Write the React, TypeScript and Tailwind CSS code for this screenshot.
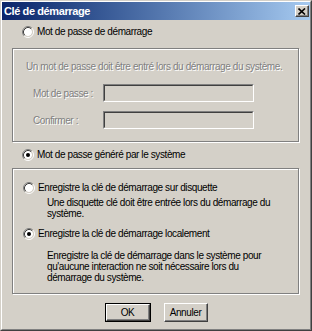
import React from 'react';

const font = "font-['Liberation_Sans',Arial,sans-serif]";

function Radio({ checked }: { checked?: boolean }) {
  return (
    <svg width="12" height="12" viewBox="0 0 12 12" className="shrink-0">
      <circle cx="6" cy="6" r="4" fill="#fff" />
      <path d="M2.11 9.89 A5.5 5.5 0 0 1 9.89 2.11" stroke="#808080" fill="none" />
      <path d="M9.89 2.11 A5.5 5.5 0 0 1 2.11 9.89" stroke="#fff" fill="none" />
      <path d="M2.82 9.18 A4.5 4.5 0 0 1 9.18 2.82" stroke="#404040" fill="none" />
      <path d="M9.18 2.82 A4.5 4.5 0 0 1 2.82 9.18" stroke="#d4d0c8" fill="none" />
      {checked && <circle cx="6" cy="6" r="2" fill="#000" />}
    </svg>
  );
}

function RadioRow({ label, checked }: { label: string; checked?: boolean }) {
  return (
    <div className="flex items-center h-[12px] gap-[3px]">
      <Radio checked={checked} />
      <span className="leading-[12px] text-black whitespace-nowrap">{label}</span>
    </div>
  );
}

function Field({ label }: { label: string }) {
  return (
    <div className="flex items-center pl-[20px]">
      <span className="w-[70px] whitespace-nowrap text-[#808080] [text-shadow:1px_1px_0_#fff]">{label}</span>
      <div className="w-[151px] h-[18px] border border-t-[#808080] border-l-[#808080] border-b-white border-r-white">
        <div className="h-full w-full border border-t-[#404040] border-l-[#404040] border-b-[#d4d0c8] border-r-[#d4d0c8] bg-[#d4d0c8]" />
      </div>
    </div>
  );
}

function Button({ label, primary }: { label: string; primary?: boolean }) {
  const face = (
    <div className="h-full w-full flex items-center justify-center border border-t-white border-l-white border-b-[#404040] border-r-[#404040] shadow-[inset_-1px_-1px_0_#808080] bg-[#d4d0c8] text-black">
      {label}
    </div>
  );
  return primary ? (
    <div className="w-[46px] h-[19px] border border-black">{face}</div>
  ) : (
    <div className="w-[44px] h-[19px]">{face}</div>
  );
}

export default function App() {
  return (
    <div className={`w-[312px] h-[331px] border border-t-[#d4d0c8] border-l-[#d4d0c8] border-b-[#404040] border-r-[#404040] bg-[#d4d0c8] text-[10px] tracking-[-0.4px] ${font}`}>
      <div className="h-full w-full border border-t-white border-l-white border-b-[#808080] border-r-[#808080] flex flex-col">
        <div className="h-[18px] flex items-center justify-between pl-[2px] pr-[1px] bg-gradient-to-r from-[#0a246a] to-[#a6caf0]">
          <span className="text-white font-bold text-[11px] leading-none whitespace-nowrap">Clé de démarrage</span>
          <div className="w-[14px] h-[12px] border border-t-white border-l-white border-b-[#404040] border-r-[#404040] shadow-[inset_-1px_-1px_0_#808080] bg-[#d4d0c8] flex items-center justify-center">
            <svg width="8" height="7" viewBox="0 0 8 7">
              <path d="M0.5 0.5 L7 6.5 M7 0.5 L0.5 6.5" stroke="#000" strokeWidth="1.6" />
            </svg>
          </div>
        </div>

        <div className="pl-[20px] mt-[6px]">
          <RadioRow label="Mot de passe de démarrage" />
        </div>

        <div className="ml-[10px] mt-[10px] w-[287px] h-[94px] border border-[#808080] shadow-[inset_1px_1px_0_#fff,1px_1px_0_#fff] pt-[11px]">
          <div className="pl-[13px] leading-[13px] whitespace-nowrap text-[#808080] [text-shadow:1px_1px_0_#fff]">
            Un mot de passe doit être entré lors du démarrage du système.
          </div>
          <div className="mt-[11px]">
            <Field label="Mot de passe :" />
          </div>
          <div className="mt-[9px]">
            <Field label="Confirmer :" />
          </div>
        </div>

        <div className="pl-[20px] mt-[7px]">
          <RadioRow label="Mot de passe généré par le système" checked />
        </div>

        <div className="ml-[10px] mt-[7px] w-[287px] h-[126px] border border-[#808080] shadow-[inset_1px_1px_0_#fff,1px_1px_0_#fff] pt-[13px] pl-[10px]">
          <RadioRow label="Enregistre la clé de démarrage sur disquette" />
          <div className="ml-[24px] mt-[3px] leading-[11px] whitespace-nowrap text-black">
            Une disquette clé doit être entrée lors du démarrage du
            <br />
            système.
          </div>
          <div className="mt-[9px]">
            <RadioRow label="Enregistre la clé de démarrage localement" checked />
          </div>
          <div className="ml-[24px] mt-[10px] leading-[11px] whitespace-nowrap text-black">
            Enregistre la clé de démarrage dans le système pour
            <br />
            qu'aucune interaction ne soit nécessaire lors du
            <br />
            démarrage du système.
          </div>
        </div>

        <div className="flex justify-center gap-[13px] mt-[9px]">
          <Button label="OK" primary />
          <Button label="Annuler" />
        </div>
      </div>
    </div>
  );
}
